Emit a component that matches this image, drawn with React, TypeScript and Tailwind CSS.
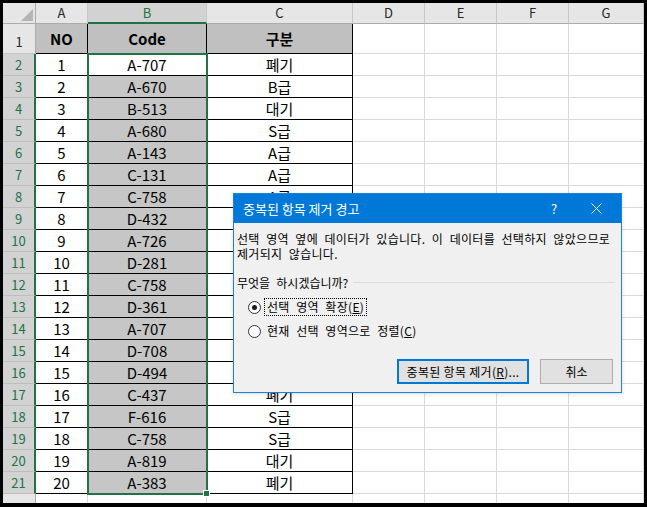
import type { ReactNode } from 'react'

const FONT = { fontFamily: '"Noto Sans CJK KR", "Noto Sans", sans-serif' }

const data: [number, string, string][] = [
  [1, 'A-707', '폐기'],
  [2, 'A-670', 'B급'],
  [3, 'B-513', '대기'],
  [4, 'A-680', 'S급'],
  [5, 'A-143', 'A급'],
  [6, 'C-131', 'A급'],
  [7, 'C-758', 'A급'],
  [8, 'D-432', '폐기'],
  [9, 'A-726', 'B급'],
  [10, 'D-281', '대기'],
  [11, 'C-758', 'S급'],
  [12, 'D-361', 'A급'],
  [13, 'A-707', 'B급'],
  [14, 'D-708', '대기'],
  [15, 'D-494', 'S급'],
  [16, 'C-437', '폐기'],
  [17, 'F-616', 'S급'],
  [18, 'C-758', 'S급'],
  [19, 'A-819', '대기'],
  [20, 'A-383', '폐기'],
]

const emptyCols = ['w-[72px]', 'w-[72px]', 'w-[72px]', 'w-[75px]']

const Empty = ({ w }: { w: string }) => (
  <div className={`${w} shrink-0 border-r border-b border-[#d9d9d9] bg-white`} />
)

const Cell = ({ w, bg, children, bold }: { w: string; bg: string; children?: ReactNode; bold?: boolean }) => (
  <div
    className={`${w} ${bg} ${bold ? 'font-bold' : ''} shrink-0 border-r border-b border-black flex items-center justify-center text-[15px] text-black pt-[1px]`}
  >
    {children}
  </div>
)

export default function App() {
  return (
    <div className="relative w-[647px] h-[507px] bg-black pl-[3px] pt-[3px] pr-[3px] pb-[4px] overflow-hidden" style={FONT}>
      <div className="h-full bg-white overflow-hidden flex flex-col">
        {/* column headers */}
        <div className="flex h-[21px] shrink-0 text-[13px] text-[#262626]">
          <div className="w-[33px] shrink-0 bg-[#e6e6e6] border-r border-b border-[#ababab] flex items-end justify-end pr-[2px] pb-[2px]">
            <svg width="12" height="12" viewBox="0 0 12 12">
              <polygon points="12,0 12,12 0,12" fill="#b4b4b4" />
            </svg>
          </div>
          <div className="w-[52px] shrink-0 bg-[#e6e6e6] border-r border-[#c6c6c6] border-b border-b-[#ababab] flex items-center justify-center">A</div>
          <div className="w-[119px] shrink-0 bg-[#d2d2d2] border-r border-[#c6c6c6] border-b-2 border-b-[#217346] text-[#217346] flex items-center justify-center">B</div>
          <div className="w-[146px] shrink-0 bg-[#e6e6e6] border-r border-[#c6c6c6] border-b border-b-[#ababab] flex items-center justify-center">C</div>
          {['D', 'E', 'F', 'G'].map((c, i) => (
            <div key={c} className={`${emptyCols[i]} shrink-0 bg-[#e6e6e6] border-r border-[#c6c6c6] border-b border-b-[#ababab] flex items-center justify-center`}>
              {c}
            </div>
          ))}
        </div>

        {/* row 1 */}
        <div className="flex h-[30px] shrink-0">
          <div className="w-[33px] shrink-0 bg-[#e6e6e6] border-r border-[#ababab] border-b border-b-[#c6c6c6] flex items-end justify-center pb-[2px] text-[13px] text-[#262626]">1</div>
          <Cell w="w-[52px]" bg="bg-[#c0c0c0]" bold>NO</Cell>
          <Cell w="w-[119px]" bg="bg-[#c0c0c0]" bold>Code</Cell>
          <Cell w="w-[146px]" bg="bg-[#c0c0c0]" bold>구분</Cell>
          {emptyCols.map((w, i) => <Empty key={i} w={w} />)}
        </div>

        {/* data rows */}
        {data.map(([no, code, kind], idx) => (
          <div key={idx} className="flex h-[22px] shrink-0">
            <div className="w-[33px] shrink-0 bg-[#d2d2d2] border-r-2 border-r-[#217346] border-b border-b-[#bdbdbd] flex items-center justify-center text-[13px] text-[#217346]">
              {idx + 2}
            </div>
            <Cell w="w-[52px]" bg="bg-white">{no}</Cell>
            <Cell w="w-[119px]" bg={idx === 0 ? 'bg-white' : 'bg-[#c6c6c6]'}>{code}</Cell>
            <Cell w="w-[146px]" bg="bg-white">{kind}</Cell>
            {emptyCols.map((w, i) => <Empty key={i} w={w} />)}
          </div>
        ))}

        {/* row 22, partly visible */}
        <div className="flex h-[22px] shrink-0">
          <div className="w-[33px] shrink-0 bg-[#e6e6e6] border-r border-[#ababab] flex items-start justify-center pt-[4px] text-[13px] text-[#262626]">22</div>
          <div className="w-[52px] shrink-0 border-r border-[#d9d9d9]" />
          <div className="w-[119px] shrink-0 border-r border-[#d9d9d9]" />
          <div className="w-[146px] shrink-0 border-r border-[#d9d9d9]" />
          {emptyCols.map((w, i) => <div key={i} className={`${w} shrink-0 border-r border-[#d9d9d9]`} />)}
        </div>
      </div>

      {/* selection outline B2:B21 */}
      <div className="absolute left-[87px] top-[53px] w-[121px] h-[442px] border-2 border-[#217346] pointer-events-none" />
      <div className="absolute left-[203px] top-[490px] w-[7px] h-[7px] bg-[#217346] border border-white" />

      {/* dialog */}
      <div className="absolute left-[233px] top-[193px] w-[389px] h-[200px] border border-[#1883d7] bg-[#f0f0f0] flex flex-col shadow-[0_1px_4px_rgba(0,0,0,0.15)] text-[12px] text-black">
        <div className="h-[29px] shrink-0 bg-[#0078d7] flex items-center text-white text-[13px] pl-[9px]">
          <span className="flex-1">중복된 항목 제거 경고</span>
          <span className="w-[14px] text-center mr-[30px]">?</span>
          <svg width="11" height="11" viewBox="0 0 11 11" className="mr-[19px]">
            <path d="M0.5 0.5 L10.5 10.5 M10.5 0.5 L0.5 10.5" stroke="#ffffff" strokeWidth="1" />
          </svg>
        </div>
        <div className="flex-1 flex flex-col pl-[3px] pt-[8px] [word-spacing:3.5px]">
          <p className="leading-[15px] whitespace-nowrap tracking-[0.3px]">
            선택 영역 옆에 데이터가 있습니다. 이 데이터를 선택하지 않았으므로
            <br />
            제거되지 않습니다.
          </p>
          <div className="flex items-center mt-[14px] leading-[15px]">
            <span>무엇을 하시겠습니까?</span>
            <div className="flex-1 h-px bg-[#dcdcdc] ml-[5px] mr-[6px]" />
          </div>
          <div className="flex items-center h-[18px] mt-[8px] pl-[11px]">
            <span className="w-[13px] h-[13px] rounded-full border border-[#333333] bg-white flex items-center justify-center">
              <span className="w-[5px] h-[5px] rounded-full bg-[#1a1a1a]" />
            </span>
            <span className="ml-[3px] h-[18px] border border-dotted border-black flex items-center px-[2px] tracking-[0.3px]">
              선택 영역 확장(<u>E</u>)
            </span>
          </div>
          <div className="flex items-center h-[18px] mt-[6px] pl-[11px]">
            <span className="w-[13px] h-[13px] rounded-full border border-[#333333] bg-white" />
            <span className="ml-[6px] tracking-[0.3px]">
              현재 선택 영역으로 정렬(<u>C</u>)
            </span>
          </div>
          <div className="flex justify-end gap-[11px] pr-[8px] mt-[19px]">
            <button className="w-[132px] h-[25px] bg-[#e1e1e1] border-2 border-[#0078d7] text-[12px] whitespace-nowrap tracking-[0.3px]">
              중복된 항목 제거(<u>R</u>)...
            </button>
            <button className="w-[73px] h-[25px] bg-[#e1e1e1] border border-[#adadad] text-[12px]">취소</button>
          </div>
        </div>
      </div>
    </div>
  )
}
